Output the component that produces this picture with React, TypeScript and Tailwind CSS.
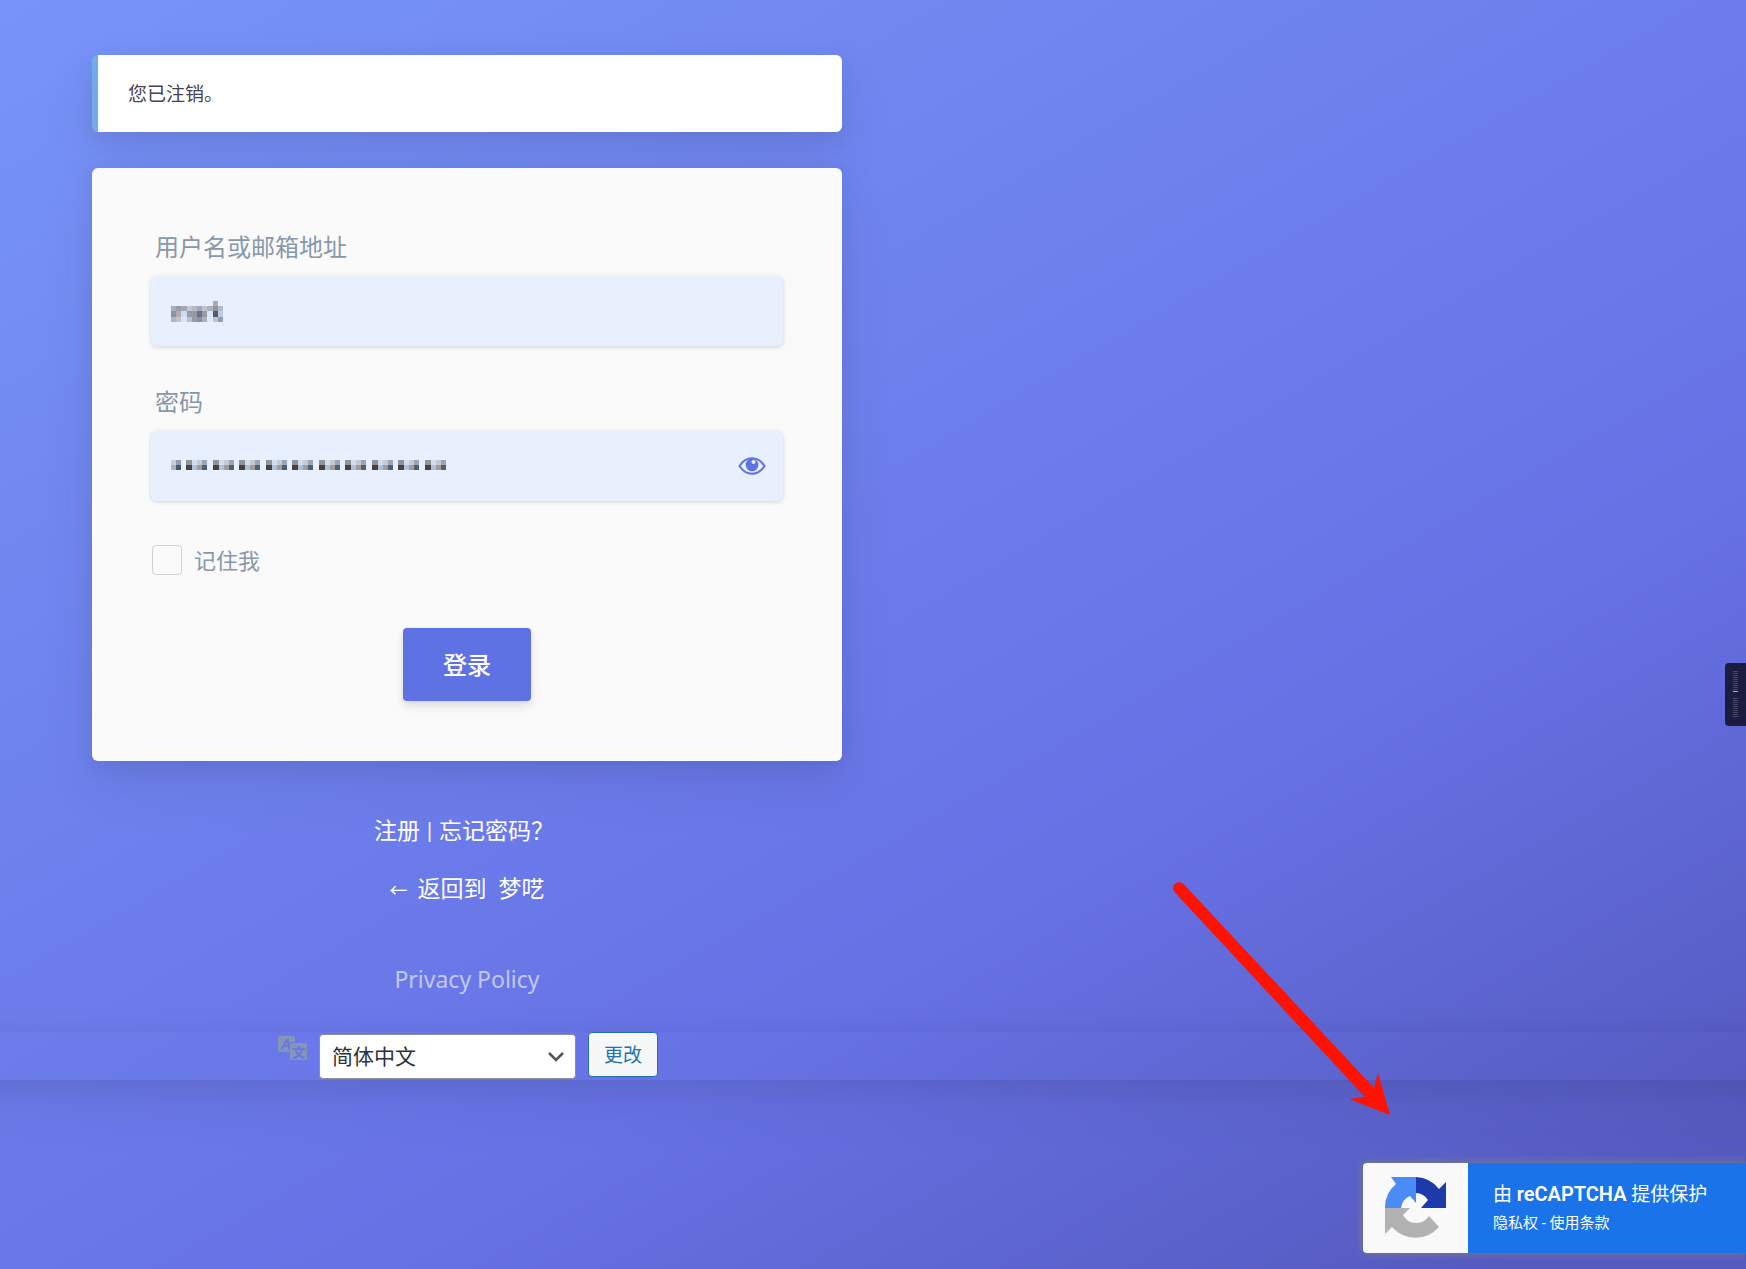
import { useState } from 'react';
import type { ReactNode } from 'react';

const userMosaic = [
  ['', '', '', '', '', '', '', '', '#a6adba', ''],
  ['#a8adb7', '#989ca6', '#a5a8b0', '#c0c8da', '#b6b9c4', '#a2a8ba', '#c3c4cb', '#adb1bf', '#8f939f', '#b0bad0'],
  ['#8f949e', '#b3abae', '#cddcf2', '#979ba9', '#949aa5', '#6d7183', '#989ba3', '#dbe6f8', '#5c5a5e', '#b8cdeb'],
  ['#b0b5bf', '#c6c4ca', '#d7e5f8', '#b8bfcf', '#999ca8', '#898f9f', '#a9b1c1', '#e0ebfb', '#b5c4dc', '#989fac'],
];

const dots = Array.from({ length: 10 }, (_, i) => 15 + Math.round(i * 26.5));

const Logo = () => (
  <svg viewBox="0 0 62 62" className="size-[62px]" aria-hidden="true">
    <path d="M31 0A31 31 0 0 1 54 12L61 5V31H36L43 23A15 15 0 0 0 31 16Z" fill="#1c3aa9" />
    <path d="M31 0V26L25 19A15 15 0 0 0 16 31H0A31 31 0 0 1 11 7L6 0Z" fill="#4a8bf5" />
    <path d="M0 31H25L18 38A15 15 0 0 0 44 39L54 50A31 31 0 0 1 7 50L0 57Z" fill="#b2b2b2" />
  </svg>
);

const TranslateIcon = () => (
  <svg viewBox="0 0 29 24" className="h-6 w-[29px]" aria-hidden="true">
    <path d="M2 0H15Q17 0 17 2V6H14Q11 6 11 9V16H2Q0 16 0 14V2Q0 0 2 0Z" fill="#8495b8" />
    <text x="3" y="13" fontSize="14" fontWeight="700" fontStyle="italic" fontFamily="Liberation Sans" fill="#6875e5">A</text>
    <rect x="12" y="7" width="17" height="17" rx="2" fill="#8495b8" />
    <text x="14" y="21" fontSize="13" fontWeight="900" fontFamily="Noto Sans CJK SC" fill="#6875e5">文</text>
  </svg>
);

const Field = ({ id, label, type, children }: { id: string; label: string; type: string; children: ReactNode }) => (
  <div className="mb-[37px]">
    <label htmlFor={id} className="mb-2.5 block pl-1 text-2xl leading-[38px] text-[#8898aa]">{label}</label>
    <div className="relative">
      <input
        id={id}
        type={type}
        className="block h-[70px] w-full rounded-md bg-[#e8f0fe] px-5 text-2xl shadow-[0_1px_4px_rgba(50,50,93,0.2)] outline-none"
      />
      {children}
    </div>
  </div>
);

const App = () => {
  const [remember, setRemember] = useState(false);

  return (
    <div className="relative min-h-screen overflow-hidden bg-[linear-gradient(150deg,#7795f8_0%,#6772e5_65%,#555abf_94%)] pt-[55px] font-['Noto_Sans','Noto_Sans_CJK_SC',sans-serif]">
      <main className="ml-[92px] max-w-[750px]">
        <p className="mb-9 rounded-md border-l-6 border-[#73abe8] bg-white px-[30px] pb-[23px] pt-[25px] text-[19px] leading-[29px] text-[#444454] shadow-[0_22px_52px_rgba(50,50,93,0.1),0_7px_22px_rgba(0,0,0,0.07)]">
          您已注销。
        </p>

        <form
          onSubmit={(e) => e.preventDefault()}
          className="rounded-md bg-[#fafafa] px-[59px] py-[60px] shadow-[0_22px_52px_rgba(50,50,93,0.1),0_7px_22px_rgba(0,0,0,0.07)]"
        >
          <Field id="user" label="用户名或邮箱地址" type="text">
            <svg className="pointer-events-none absolute left-5 top-[25px] h-[21px] w-[52px]" viewBox="0 0 52 21" shapeRendering="crispEdges" aria-hidden="true">
              {userMosaic.map((row, y) =>
                row.map((fill, x) => fill && <rect key={`${x}-${y}`} x={x * 5.2} y={y * 5.2} width="5.3" height="5.3" fill={fill} />)
              )}
            </svg>
          </Field>

          <Field id="pass" label="密码" type="password">
            <svg className="pointer-events-none absolute left-5 top-[29px] h-[10px] w-[276px]" viewBox="0 0 276 10" shapeRendering="crispEdges" aria-hidden="true">
              <path d="M0 0h5v5H0z" fill="#cbcdd4" />
              <path d="M5 0h5v5H5z" fill="#929eb0" />
              <path d="M0 5h5v5H0z" fill="#b5b0b3" />
              <path d="M5 5h5v5H5z" fill="#4a5567" />
              {dots.map((x) => (
                <g key={x} transform={`translate(${x} 0)`}>
                  <path d="M0 0h6v5H0z" fill="#929399" />
                  <path d="M0 5h6v5H0z" fill="#464142" />
                  <path d="M6 0h5v5H6z" fill="#cfdff2" />
                  <path d="M6 5h5v5H6z" fill="#afc2dc" />
                  <path d="M11 0h5v5h-5z" fill="#c8cace" />
                  <path d="M11 5h5v5h-5z" fill="#a29d9d" />
                  <path d="M16 0h5v5h-5z" fill="#98a6b8" />
                  <path d="M16 5h5v5h-5z" fill="#505f73" />
                </g>
              ))}
            </svg>
            <button type="button" aria-label="显示密码" className="absolute right-[17px] top-0 flex h-[70px] items-center">
              <svg viewBox="0 0 28 18" className="h-[18px] w-7" aria-hidden="true">
                <path d="M1.500 9Q6.500 1.300 14 1.300T26.500 9Q21.500 16.700 14 16.700T1.500 9Z" fill="none" stroke="#5e72e4" strokeWidth="2" />
                <circle cx="14" cy="8" r="6.300" fill="#5e72e4" />
                <circle cx="15.500" cy="5" r="2" fill="#e8f0fe" />
              </svg>
            </button>
          </Field>

          <div className="flex items-center gap-3 pt-1.5">
            <input
              id="remember"
              type="checkbox"
              checked={remember}
              onChange={(e) => setRemember(e.target.checked)}
              className="ml-px size-[30px] appearance-none rounded border border-[#cad1d7] bg-[#fafafa] checked:bg-[#5e72e4]"
            />
            <label htmlFor="remember" className="text-[22px] leading-8 text-[#8898aa]">记住我</label>
          </div>

          <div className="mt-[52px] text-center">
            <button type="submit" className="h-[73px] rounded bg-[#5e72e4] px-10 text-2xl font-medium text-white shadow-[0_6px_9px_rgba(50,50,93,0.11),0_1px_4px_rgba(0,0,0,0.08)]">
              登录
            </button>
          </div>
        </form>

        <nav className="mt-[51px] flex flex-col items-center text-[23px] leading-9 text-white">
          <p className="flex gap-1 pr-1.5">
            <a href="#register">注册</a>
            <span className="text-xl leading-9">|</span>
            <a href="#lost">忘记密码？</a>
          </p>
          <a href="#home" className="mt-[22px] flex gap-2.5">
            <span className="text-lg leading-10">←</span>
            <span>返回到&nbsp; 梦呓</span>
          </a>
          <a href="#privacy" className="mt-[51px] text-white/60">Privacy Policy</a>
        </nav>
      </main>

      <form
        onSubmit={(e) => e.preventDefault()}
        className="-mx-16 mt-[35px] h-12 px-16 shadow-[0_22px_52px_rgba(50,50,93,0.1),0_7px_22px_rgba(0,0,0,0.07)]"
      >
        <div className="ml-[92px] flex max-w-[752px] items-start justify-center gap-3">
          <label htmlFor="language" aria-label="语言" className="pt-1"><TranslateIcon /></label>
          <div className="relative pt-0.5">
            <select id="language" className="block h-[45px] w-[257px] appearance-none rounded border border-[#8c8f94] bg-white px-3 text-[21px] text-[#2c3338]">
              <option>简体中文</option>
              <option>English</option>
            </select>
            <svg viewBox="0 0 16 10" className="pointer-events-none absolute right-3 top-5 h-[10px] w-4" aria-hidden="true">
              <path d="M1 1L8 8L15 1" fill="none" stroke="#555" strokeWidth="2.500" />
            </svg>
          </div>
          <button type="submit" className="h-[45px] w-[70px] rounded border border-[#2271b1] bg-[#f6f7f7] pt-0.5 text-[19px] text-[#2271b1]">
            更改
          </button>
        </div>
      </form>

      <svg viewBox="0 0 260 270" className="pointer-events-none absolute left-[1150px] top-[860px] h-[270px] w-[260px]" aria-hidden="true">
        <path d="M24.500 32A6 6 0 1 1 34 24.500L224 228L228 213L240 255L199 239L215 237Z" fill="#ff1200" />
      </svg>

      <div className="absolute right-0 top-[663px] rounded-l bg-[#1c1b40] px-2 py-2">
        <svg viewBox="0 0 5 47" className="h-[47px] w-[5px]" shapeRendering="crispEdges" aria-hidden="true">
          <path d="M2.500 0V20" stroke="#484766" strokeWidth="5" strokeDasharray="1 1" />
          <path d="M0 20h5" stroke="#e5a65a" strokeWidth="1" />
          <path d="M2.500 27V47" stroke="#484766" strokeWidth="5" strokeDasharray="1 1" />
        </svg>
      </div>

      <aside className="absolute bottom-4 right-0 flex h-[90px] w-[383px] overflow-hidden rounded-l bg-[#1a73e8] text-white shadow-[0_0_8px_#808080]">
        <div className="flex w-[105px] items-center justify-center bg-[#f9f9f9]"><Logo /></div>
        <div className="flex flex-col justify-center pb-0.5 pl-[25px] font-['Roboto','Noto_Sans_CJK_SC',sans-serif]">
          <p className="text-[19px] leading-8">由 <strong className="text-xl font-semibold leading-7">reCAPTCHA</strong> 提供保护</p>
          <p className="text-[15px] leading-6"><a href="#privacy">隐私权</a> - <a href="#terms">使用条款</a></p>
        </div>
      </aside>
    </div>
  );
};

export default App;
